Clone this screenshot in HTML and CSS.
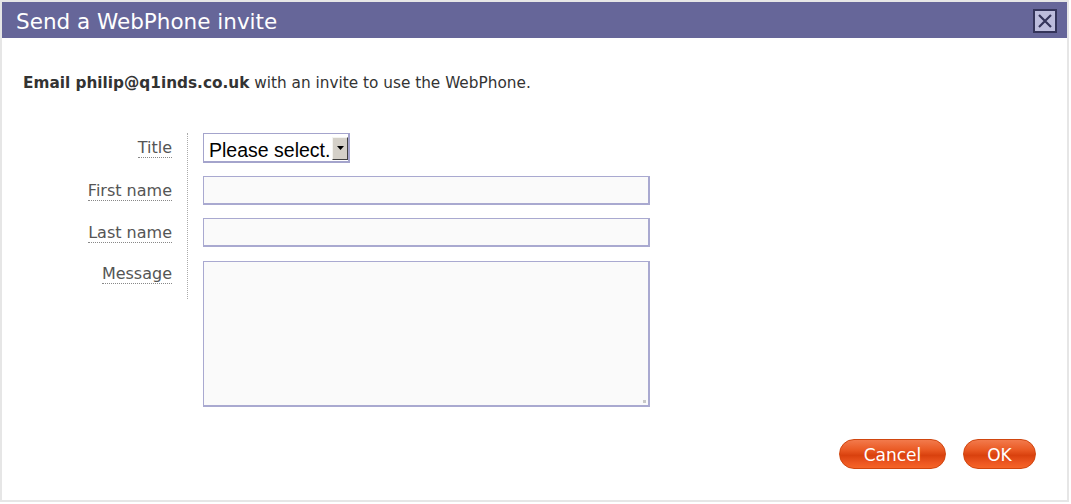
FILE: index.html
```html
<!DOCTYPE html>
<html lang="en">
<head>
<meta charset="utf-8">
<title>Send a WebPhone invite</title>
<link rel="stylesheet" href="styles.css">
</head>
<body>
<div class="dialog">
  <div class="header">
    <span class="title">Send a WebPhone invite</span>
    <span class="close" aria-label="Close">
      <svg width="24" height="24" viewBox="0 0 24 24">
        <rect x="1" y="1" width="22" height="22" fill="#bcbcdc" stroke="#34345a" stroke-width="2"/>
        <path d="M6 6 L18 18 M18 6 L6 18" stroke="#34345a" stroke-width="2.2" fill="none"/>
      </svg>
    </span>
  </div>
  <div class="content">
    <p class="intro"><b>Email philip@q1inds.co.uk</b> with an invite to use the WebPhone.</p>
    <div class="form">
      <div class="labels">
        <div class="lab r30"><span>Title</span></div>
        <div class="lab r29"><span>First name</span></div>
        <div class="lab r29"><span>Last name</span></div>
        <div class="lab r39"><span>Message</span></div>
      </div>
      <div class="fields">
        <div class="select"><span class="sel-text">Please select.</span><span class="sel-btn"><svg width="7" height="4" viewBox="0 0 7 4"><path d="M0 0 H7 L3.5 4 Z" fill="#000"/></svg></span></div>
        <input class="text f1" type="text">
        <input class="text f2" type="text">
        <textarea class="area"></textarea>
      </div>
    </div>
    <div class="buttons">
      <button class="btn cancel">Cancel</button>
      <button class="btn ok">OK</button>
    </div>
  </div>
</div>
</body>
</html>
```
FILE: styles.css
```css
html, body {
  margin: 0;
  padding: 0;
  background: #ffffff;
}
body {
  font-family: "DejaVu Sans", Verdana, sans-serif;
  color: #333333;
}
.dialog {
  box-sizing: border-box;
  width: 1069px;
  height: 502px;
  border: 2px solid #e6e6e6;
  display: flex;
  flex-direction: column;
}
.header {
  box-sizing: border-box;
  height: 36px;
  background: #666699;
  display: flex;
  align-items: center;
  justify-content: space-between;
  padding: 0 10px 0 14px;
}
.title {
  color: #ffffff;
  font-size: 21.5px;
  line-height: 32px;
  padding-top: 3px;
}
.close {
  display: flex;
  width: 24px;
  height: 24px;
  margin-top: 1px;
}
.content {
  padding: 36px 31px 31px 21px;
  display: flex;
  flex-direction: column;
}
.intro {
  margin: 0;
  font-size: 15.3px;
  line-height: 18px;
  color: #333333;
}
.intro b {
  font-weight: bold;
}
.form {
  display: flex;
  margin-top: 41px;
}
.labels {
  width: 149px;
  padding-right: 15px;
  border-right: 1px dotted #aaaaaa;
  display: flex;
  flex-direction: column;
  gap: 13px;
  align-self: flex-start;
}
.lab {
  text-align: right;
  font-size: 16px;
  line-height: 30px;
  color: #555555;
  white-space: nowrap;
}
.lab span {
  border-bottom: 1px dotted #888888;
}
.r30 { height: 30px; }
.r29 { height: 29px; line-height: 29px; }
.r39 { height: 39px; line-height: 28px; }
.fields {
  padding-left: 15px;
  display: flex;
  flex-direction: column;
  align-items: flex-start;
}
.select {
  box-sizing: border-box;
  width: 147px;
  height: 30px;
  border: 1px solid #a4a4cc;
  border-width: 1px 2px 2px 1px;
  background: #ffffff;
  display: flex;
  align-items: center;
  padding: 1px 0 0 5px;
}
.sel-text {
  flex: 1;
  white-space: nowrap;
  font-family: "Liberation Sans", Arial, sans-serif;
  font-size: 19.5px;
  color: #000000;
  line-height: 24px;
  padding-top: 3px;
}
.sel-btn {
  box-sizing: border-box;
  flex: none;
  width: 16px;
  height: 23px;
  background: #d4d0c8;
  border-style: solid;
  border-width: 1px;
  border-color: #f4f4f0 #404040 #404040 #f4f4f0;
  display: flex;
  align-items: center;
  justify-content: center;
}
.text, .area {
  box-sizing: border-box;
  width: 447px;
  border: 1px solid #a9a9d0;
  border-width: 1px 2px 2px 1px;
  background: #fafafa;
  margin: 0;
  padding: 0;
  font-family: "DejaVu Sans", sans-serif;
  display: block;
  outline: none;
}
.text {
  height: 29px;
}
.f1 { margin-top: 13px; }
.f2 { margin-top: 13px; }
.area {
  margin-top: 14px;
  height: 146px;
  resize: none;
  background: #fafafa linear-gradient(#c8c8c8, #c8c8c8) no-repeat right 2px bottom 2px / 3px 3px;
}
.buttons {
  display: flex;
  justify-content: flex-end;
  gap: 17px;
  margin-top: 32px;
}
.btn {
  box-sizing: border-box;
  height: 30px;
  border: 1px solid #d0460f;
  border-radius: 15px;
  background: linear-gradient(#f27a4c 0%, #ea5a24 35%, #d9410e 55%, #ec5620 80%, #f56428 100%);
  color: #ffffff;
  font-family: "DejaVu Sans", Verdana, sans-serif;
  font-size: 17px;
  line-height: 26px;
  padding: 2px 0 0;
  cursor: pointer;
}
.cancel { width: 107px; }
.ok { width: 73px; }
```
